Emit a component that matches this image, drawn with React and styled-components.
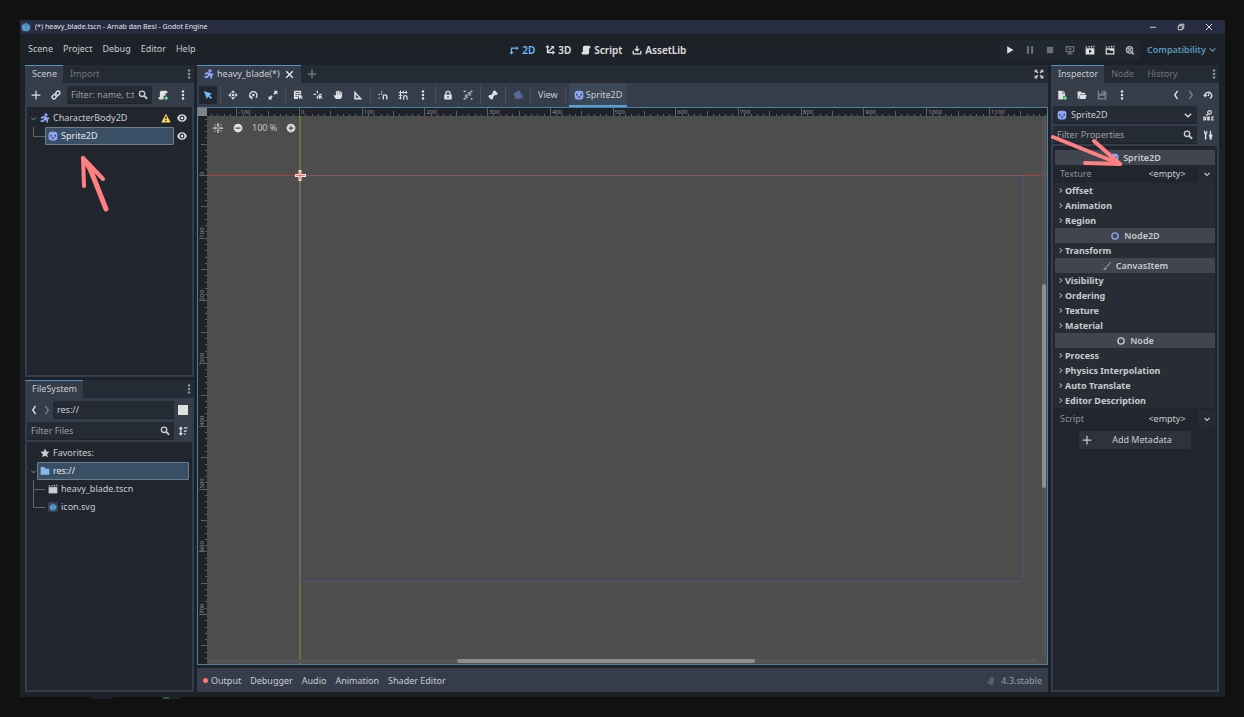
import React, { useState } from "react";
import styled, { createGlobalStyle, css } from "styled-components";

const UNIT = 62.72;
const ORIGIN = { x: 101, y: 67 };

const glyphs = {
  add: <path d="M7 1v6H1v2h6v6h2V9h6V7H9V1z" />,
  close: <path d="M3 1.5 1.5 3l5 5-5 5L3 14.5l5-5 5 5 1.500-1.500-5-5 5-5L13 1.500l-5 5z" />,
  link: (
    <g fill="none" stroke="currentColor" strokeWidth="2.2">
      <path d="M7 6.500V5.500l2.500-3a2.700 2.700 0 0 1 4 3.800L11 9H9" />
      <path d="M9 9.500v1l-2.500 3a2.700 2.700 0 0 1-4-3.800L5 7h2" />
      <path d="m6.500 9.500 3-3" />
    </g>
  ),
  search: (
    <g fill="none" stroke="currentColor">
      <circle cx="6.500" cy="6" r="4.300" strokeWidth="2.200" />
      <path d="m9.500 9 5 5" strokeWidth="3" />
    </g>
  ),
  dots: (
    <g>
      <circle cx="8" cy="2.500" r="2" />
      <circle cx="8" cy="8" r="2" />
      <circle cx="8" cy="13.500" r="2" />
    </g>
  ),
  body: (
    <g>
      <circle cx="9.500" cy="2.800" r="2.600" />
      <path
        d="M8.500 6 7.500 9.500l4 1.500v4M7.500 9.500 5 13H1M8.500 6.500H4L2 9M9 6.500l2.500 2h3.500"
        fill="none"
        stroke="currentColor"
        strokeWidth="2.800"
      />
    </g>
  ),
  sprite: (
    <g>
      <path d="M5 1C3 1 1 3 1 5v6c0 2 2 4 4 4h6c2 0 4-2 4-4V5c0-2-2-4-4-4z" />
      <g fill="#2f3a63">
        <ellipse cx="4.500" cy="7.500" rx="1.200" ry="1.700" />
        <ellipse cx="11.500" cy="7.500" rx="1.200" ry="1.700" />
        <path d="M5.500 10.500h5c-.5 2.500-4.500 2.500-5 0z" />
      </g>
    </g>
  ),
  warning: (
    <g>
      <path d="M8 1 .5 15h15z" />
      <path d="M7 5h2v5H7zm0 6h2v2H7z" fill="#21262e" />
    </g>
  ),
  eye: (
    <g>
      <path
        fillRule="evenodd"
        d="M8 2C4 2 1.300 4.800.3 8c1 3.200 3.700 6 7.700 6s6.700-2.800 7.700-6C14.700 4.800 12 2 8 2zm0 2a4 4 0 1 1 0 8 4 4 0 0 1 0-8z"
      />
      <circle cx="8" cy="8" r="2.200" />
    </g>
  ),
  script: <path d="M6 1a3 3 0 0 0-3 3v7H1v2a2 2 0 0 0 2 2h7a3 3 0 0 0 3-3V5h2V3a2 2 0 0 0-2-2z" />,
  scriptAdd: (
    <g>
      <path d="M6 1a3 3 0 0 0-3 3v7H1v2a2 2 0 0 0 2 2h6V9h3V5h3V3a2 2 0 0 0-2-2z" />
      <path d="M12 10h2v2h2v2h-2v2h-2v-2h-2v-2h2z" fill="#5fff97" />
    </g>
  ),
  chevronDown: <path d="m3 6 5 5 5-5" fill="none" stroke="currentColor" strokeWidth="2.200" />,
  chevronRight: <path d="m6 3 5 5-5 5" fill="none" stroke="currentColor" strokeWidth="2.400" />,
  back: <path d="M10.500 1.500 6 8l4.500 6.500" fill="none" stroke="currentColor" strokeWidth="2.200" />,
  forward: <path d="M5.500 1.500 10 8l-4.500 6.500" fill="none" stroke="currentColor" strokeWidth="2.200" />,
  select: <path d="m1.500 1.500 4.500 13 2.500-4 4 4 2-2-4-4 4-2.500z" />,
  move: (
    <g>
      <circle cx="8" cy="8" r="2.200" />
      <path d="M8 .5 4.500 4.500h7zM8 15.500l-3.500-4h7zM.5 8l4-3.500v7zM15.500 8l-4-3.500v7z" />
    </g>
  ),
  rotate: (
    <g>
      <path d="M4.500 12.500a5.800 5.800 0 1 1 8 0" fill="none" stroke="currentColor" strokeWidth="2.200" />
      <path d="M1 10h6v5.500z" />
      <circle cx="8.500" cy="8" r="2" />
    </g>
  ),
  scale: (
    <path d="M9 1h6v6l-2-2-2.500 2.500-2-2L11 3zM1 9v6h6l-2-2 2.500-2.500-2-2L3 11z" />
  ),
  listSelect: (
    <g>
      <path fillRule="evenodd" d="M1.500 1h11.500v6.500L8 6v8.500H1.500zM4 3v1.300h7V3zm0 3.500v1.300h3V6.500zM4 10v1.300h3V10z" />
      <path d="m8 7 2.500 8 1.500-2.500 2 2 1.500-1.500-2-2L16 9.500z" />
    </g>
  ),
  pivot: (
    <g>
      <path d="M6 1h2v4H6zM1 6h4v2H1zM10 6h4v2h-4zM6 10h2v4H6z" />
      <path d="m8 8 2 7 1.500-2.500 2 2 1.500-1.500-2-2L15 9.500z" />
    </g>
  ),
  pan: <path d="M7 1v6H6.500V2H4.700v7L2.500 7.500 1 9l3.500 5.500h7.500L14.500 11V3.500h-1.800V7h-.4V2h-1.800v5H10V1z" />,
  ruler: <path fillRule="evenodd" d="M2 1v14h13zm2.500 6 5 5.500h-5z" />,
  smartSnap: (
    <g>
      <path d="M5 2h2v2H5zM1 6h2v2H1zM5 6h2v2H5zM1 12h2v2H1z" />
      <path d="M8.500 15v-4.500a2.800 2.800 0 0 1 5.600 0V15" fill="none" stroke="currentColor" strokeWidth="2.200" />
    </g>
  ),
  gridSnap: (
    <g fill="none" stroke="currentColor">
      <path d="M4 1v14M8.500 1v5M13 1v5M1 4h14M1 8.500h6M1 13h5" strokeWidth="1.600" />
      <path d="M9 15.500v-4a2.700 2.700 0 0 1 5.400 0v4" strokeWidth="2" />
    </g>
  ),
  lock: (
    <path
      fillRule="evenodd"
      d="M8 1a4.500 4.500 0 0 0-4.500 4.500V7H2v8h12V7h-1.500V5.500A4.500 4.500 0 0 0 8 1zm0 2a2.500 2.500 0 0 1 2.500 2.500V7h-5V5.500A2.500 2.500 0 0 1 8 3zM7 9.500h2v3H7z"
    />
  ),
  group: (
    <g>
      <path d="M1 1h3v2H1zM12.500 1h2.500v2h-2.500zM1 13h3v2H1zM12.500 13h2.500v2h-2.500z" />
      <path d="M7 3h6v6H9V6H7z" opacity=".55" />
      <path d="M3 7h5v6H3z" opacity=".55" />
    </g>
  ),
  bone: (
    <g>
      <path d="m4.500 11.500 7-7" stroke="currentColor" strokeWidth="4.400" />
      <circle cx="10.300" cy="3.500" r="2.700" />
      <circle cx="12.500" cy="5.700" r="2.700" />
      <circle cx="3.500" cy="10.300" r="2.700" />
      <circle cx="5.700" cy="12.500" r="2.700" />
    </g>
  ),
  camera: (
    <g>
      <circle cx="9" cy="5" r="3.800" />
      <circle cx="4" cy="6.500" r="3" />
      <path d="M3 6h9.500v2.500l3-1v6l-3-1.500v2H3z" />
    </g>
  ),
  view2d: (
    <g>
      <path d="M4 13V5h8" fill="none" stroke="currentColor" strokeWidth="2" />
      <path d="M12 1.500 15.500 5 12 8.500zM.5 11h7L4 15z" />
    </g>
  ),
  view3d: (
    <g>
      <path d="M4 3v9h9M4 12l8-8" fill="none" stroke="currentColor" strokeWidth="2" />
      <path d="M4 0 .5 4h7zM16 12l-4-3.500v7zM14.500 1.500H9l5.500 5.500z" />
    </g>
  ),
  assetLib: (
    <g fill="none" stroke="currentColor" strokeWidth="2">
      <path d="M8 1v8M4.500 6 8 9.500 11.500 6M2 9v5h12V9" />
    </g>
  ),
  play: <path d="M3.500 2v12l10-6z" />,
  pause: <path d="M3 2h3.500v12H3zM9.500 2H13v12H9.500z" />,
  stop: <path d="M3 3h10v10H3z" />,
  remote: (
    <path fillRule="evenodd" d="M1 1.500h14v10H9.500v1.500H12v2H4v-2h2.500v-1.500H1zm2 2v6h10v-6zM6 4l5.500 2.500L6 9z" />
  ),
  playScene: (
    <g>
      <path d="m1 2.500 2-.5 1 2H1zM5 2l2-.3 1 2.300H6zM9 1.500l2-.3 1 2.800h-2zM13 1l2-.3V4h-1z" />
      <path fillRule="evenodd" d="M1 5h14v10H1zm5.500 2v6l4.500-3z" />
    </g>
  ),
  playCustom: (
    <g>
      <path d="m1 2.500 2-.5 1 2H1zM5 2l2-.3 1 2.300H6zM9 1.500l2-.3 1 2.800h-2zM13 1l2-.3V4h-1z" />
      <path fillRule="evenodd" d="M1 5h14v10H1zm2 2.500V13h10V9H8L7 7.500z" />
    </g>
  ),
  movie: (
    <path
      fillRule="evenodd"
      d="M7.500 1a6.500 6.500 0 1 0 3 12.300V15H15v-2h-2V9.500A6.500 6.500 0 0 0 7.500 1zm0 2a1.300 1.300 0 1 1 0 2.600 1.300 1.300 0 0 1 0-2.600zM4.500 6.500a1.300 1.300 0 1 1 0 2.600 1.300 1.300 0 0 1 0-2.600zm6 0a1.300 1.300 0 1 1 0 2.600 1.300 1.300 0 0 1 0-2.600zm-3 3a1.300 1.300 0 1 1 0 2.600 1.300 1.300 0 0 1 0-2.600z"
    />
  ),
  clapper: (
    <g>
      <path d="m1 2.500 2-.5 1 2H1zM5 2l2-.3 1 2.300H6zM9 1.500l2-.3 1 2.800h-2zM13 1l2-.3V4h-1z" />
      <path d="M1 5h14v10H1z" />
    </g>
  ),
  expand: (
    <path d="M1 1h5L4.500 2.500 7 5 5 7 2.500 4.500 1 6zM15 1v5l-1.500-1.500L11 7 9 5l2.500-2.500L10 1zM1 15v-5l1.500 1.500L5 9l2 2-2.500 2.500L6 15zM15 15h-5l1.500-1.500L9 11l2-2 2.500 2.500L15 10z" />
  ),
  fileNew: (
    <g>
      <path d="M2 1h7v5h4v4h-3v5H2zM10 1l3.500 4H10z" />
      <path d="M12 10h2v2h2v2h-2v2h-2v-2h-2v-2h2z" fill="#5fff97" />
    </g>
  ),
  folderOpen: <path d="M1 13V2.500h5l1.500 2H13V7H5l-2 6.500zM5.500 8H15.500l-2 6.500h-10z" />,
  save: <path fillRule="evenodd" d="M1 1h2v5h7V1h2.500L15 3.500V15H1zm6 0h2v4H7zM4 9v4h8V9z" />,
  history: (
    <g>
      <path d="M3.500 9.500a5.200 5.200 0 1 1 7.500 4" fill="none" stroke="currentColor" strokeWidth="2.200" />
      <path d="M0 7.500h7L3.500 12z" />
      <path d="M8 5.500h2v4H7.500V8H8z" />
    </g>
  ),
  docs: (
    <g fill="none" stroke="currentColor" strokeWidth="1.800">
      <circle cx="9.500" cy="3.500" r="2.600" />
      <path d="M8 5.500 4.500 8" />
      <path d="M1.500 10.500v4H3c1.500 0 1.500-4 0-4zM7 10.500h2v4H7zM15.500 10.500H13v4h2.500" />
    </g>
  ),
  tools: (
    <path d="M1.500 1v4L3 6.500V15h2.500V6.500L7 5V1H5.500v3h-2V1zM11 1h2v6h2v3l-1 1v4h-3.500v-4l-1-1V7H11z" />
  ),
  sort: (
    <path d="M4.500.5 8 5H5.500v6H8l-3.500 4.500L1 11h2.500V5H1zM9.500 2H15v2H9.500zM9.500 7H14v2H9.500zM9.500 12h2.500v2H9.500z" />
  ),
  square: <path d="M0 0h16v16H0z" />,
  star: <path d="m8 .8 2.200 4.700 5.100.6-3.800 3.500 1 5.100L8 12.200l-4.500 2.500 1-5.100L.7 6.100l5.100-.6z" />,
  folder: <path d="M1 13.500v-12h6l1.500 3H15v9.500H1z" />,
  ring: <circle cx="8" cy="8" r="5" fill="none" stroke="currentColor" strokeWidth="2.200" />,
  brush: <path d="M14 1 7 8l2 2 6-8zM6 9c-2 0-1.500 3-5 5 3 1 6.500.5 7-3z" />,
  center: (
    <g>
      <path d="M7 0h2v3H7zM7 13h2v3H7zM0 7h3v2H0zM13 7h3v2h-3zM7 7h2v2H7z" />
      <path d="M5.500 3.500h5L8 6.500zM5.500 12.500h5L8 9.500zM3.500 5.500v5L6.500 8zM12.500 5.500v5L9.500 8z" />
      <path d="M2 2h2v2H2zM12 2h2v2h-2zM2 12h2v2H2zM12 12h2v2h-2z" opacity=".7" />
    </g>
  ),
  zoomOut: <path fillRule="evenodd" d="M8 1a7 7 0 1 0 0 14A7 7 0 0 0 8 1zM4 7h8v2H4z" />,
  zoomIn: <path fillRule="evenodd" d="M8 1a7 7 0 1 0 0 14A7 7 0 0 0 8 1zM7 4h2v3h3v2H9v3H7V9H4V7h3z" />,
  bell: <path d="M10 1 8.500 2C5.500 2 5.500 5 5 7.500L1.500 11 10 15l1-2 1.500-1.500V7c1-2 1-4-1-5z" />,
  godot: (
    <g>
      <path d="M7 1 6 3 4 2 3 4 1 5v6c0 2.500 3.500 4 7 4s7-1.500 7-4V5l-2-1-1-2-2 1-1-2z" fill="#478cbf" />
      <circle cx="4.800" cy="8.500" r="1.300" fill="#9cc3df" />
      <circle cx="11.200" cy="8.500" r="1.300" fill="#9cc3df" />
      <path d="M4 12h8v1H4z" fill="#7fb0d4" />
    </g>
  ),
  projectIcon: (
    <g>
      <rect width="16" height="16" rx="2" fill="#363d52" />
      <path d="M7 2.500 6 4 4.500 3.500 4 5 2.500 5.500v5c0 2 2.500 3.300 5.500 3.300s5.500-1.300 5.500-3.300v-5L12 5l-.5-1.500L10 4 9 2.500z" fill="#478cbf" />
      <circle cx="5.500" cy="8.500" r="1" fill="#a9cde6" />
      <circle cx="10.500" cy="8.500" r="1" fill="#a9cde6" />
    </g>
  ),
  minimize: <path d="M2 8.500h12" stroke="currentColor" strokeWidth="1.800" />,
  restore: (
    <path d="M2.500 5.500h8v8h-8zM5.500 5V2.500h8v8H11" fill="none" stroke="currentColor" strokeWidth="1.800" />
  ),
  cross: <path d="m2 2 12 12M14 2 2 14" stroke="currentColor" strokeWidth="1.800" />,
};

const Icon = ({ name, size = 10, color }) => (
  <Glyph viewBox="0 0 16 16" $size={size} $color={color} aria-hidden="true">
    {glyphs[name]}
  </Glyph>
);

const leftTools = [
  ["move", "rotate", "scale"],
  ["listSelect", "pivot", "pan", "ruler"],
  ["smartSnap", "gridSnap", "dots"],
  ["lock", "group"],
  ["bone"],
];

const runButtons = [
  { name: "play" },
  { name: "pause", dim: true },
  { name: "stop", dim: true },
  { name: "remote", dim: true },
  { name: "playScene" },
  { name: "playCustom" },
  { name: "movie", color: "#a9adb3" },
];

const range = (from, to) => Array.from({ length: to - from + 1 }, (_, i) => from + i);

const Dock = ({ label, tabs, children }) => (
  <DockFrame aria-label={label}>
    <TabBar>
      {tabs.map((tab, i) => (
        <Tab key={tab} $active={i === 0}>{tab}</Tab>
      ))}
      <Spacer />
      <TabMenu aria-label={`${label} options`}>
        <Icon name="dots" color="#8a9099" />
      </TabMenu>
    </TabBar>
    {children}
  </DockFrame>
);

const Canvas = () => {
  const left = ORIGIN.x;
  const top = ORIGIN.y;
  const right = Math.round(left + UNIT * 11.52);
  const bottom = Math.round(top + UNIT * 6.48);

  return (
    <CanvasSvg>
      <rect width="100%" height="100%" fill="#4d4d4d" />
      <rect x={left} y="0" width="2" height="100%" fill="#5d7b32" />
      <rect x="0" y={top} width="100%" height="1" fill="#b03c4a" />
      <rect x={left} y={top} width={right - left} height="1" fill="#8c4f78" />
      <rect x={left} y={top} width="2" height={bottom - top} fill="#5f7060" />
      <rect x={right} y={top} width="1" height={bottom - top} fill="#575388" />
      <rect x={left} y={bottom} width={right - left} height="1" fill="#57546f" />
      <path d={`M${left - 4} ${top + 0.5}h11M${left + 1} ${top - 5}v11`} stroke="#f4e4e4" strokeWidth="3" />
      <path d={`M${left - 3} ${top + 0.5}h9M${left + 1} ${top - 4}v9`} stroke="#ff6b5f" strokeWidth="1" />

      <rect width="100%" height="8" fill="#1e2329" />
      <rect width="9" height="100%" fill="#1e2329" />
      {range(-14, 119).map((n) => {
        const x = Math.round(left + (n * UNIT) / 10);
        const size = n % 10 === 0 ? 8 : n % 5 === 0 ? 5 : 2;
        return <rect key={n} x={x} y={8 - size} width="1" height={size} fill="#5b6068" />;
      })}
      {range(-9, 77).map((n) => {
        const y = Math.round(top + (n * UNIT) / 10);
        const size = n % 10 === 0 ? 8 : n % 5 === 0 ? 6 : 2;
        return <rect key={n} x={9 - size} y={y} width={size} height="1" fill="#5b6068" />;
      })}
      {range(-1, 11).map((n) => (
        <RulerText key={n} x={left + n * UNIT + 2} y="6">{n * 100}</RulerText>
      ))}
      {range(0, 7).map((n) => (
        <RulerText key={n} transform={`translate(6 ${top + n * UNIT}) rotate(-90)`}>{n * 100}</RulerText>
      ))}
      <rect width="9" height="8" fill="#7f8388" />
    </CanvasSvg>
  );
};

const Section = ({ title }) => (
  <SectionRow>
    <Icon name="chevronRight" size={7} color="#a4a8ae" />
    {title}
  </SectionRow>
);

const Category = ({ icon, color, title }) => (
  <CategoryRow>
    <Icon name={icon} color={color} />
    {title}
  </CategoryRow>
);

const Property = ({ id, title }) => (
  <PropertyRow>
    <label htmlFor={id}>{title}</label>
    <PropertyValue>
      <EmptySelect id={id}>
        <option>&lt;empty&gt;</option>
      </EmptySelect>
      <PropertyArrow>
        <Icon name="chevronDown" size={8} color="#c8cacd" />
      </PropertyArrow>
    </PropertyValue>
  </PropertyRow>
);

const App = () => {
  const [tool, setTool] = useState("select");

  const toolButton = (name) => (
    <IconButton key={name} aria-label={name} $active={tool === name} onClick={() => setTool(name)}>
      <Icon name={name} color={tool === name ? "#70bafa" : "#e0e0e0"} />
    </IconButton>
  );

  return (
    <Page>
      <GlobalStyle />
      <Window>
        <TitleBar>
          <Icon name="godot" />
          <TitleText>(*) heavy_blade.tscn - Arnab dan Besi - Godot Engine</TitleText>
          <Spacer />
          <WindowButton aria-label="Minimize"><Icon name="minimize" size={8} /></WindowButton>
          <WindowButton aria-label="Restore"><Icon name="restore" size={8} /></WindowButton>
          <WindowButton aria-label="Close"><Icon name="cross" size={8} /></WindowButton>
        </TitleBar>

        <MenuBar>
          <Menus>
            {["Scene", "Project", "Debug", "Editor", "Help"].map((menu) => (
              <MenuButton key={menu}>{menu}</MenuButton>
            ))}
          </Menus>
          <Screens>
            <ScreenButton $active><Icon name="view2d" />2D</ScreenButton>
            <ScreenButton><Icon name="view3d" />3D</ScreenButton>
            <ScreenButton><Icon name="script" />Script</ScreenButton>
            <ScreenButton><Icon name="assetLib" />AssetLib</ScreenButton>
          </Screens>
          <RunArea>
            <RunBar>
              {runButtons.map(({ name, dim, color }) => (
                <RunButton key={name} aria-label={name} disabled={dim}>
                  <Icon name={name} color={dim ? "#6b7077" : color || "#e0e0e0"} />
                </RunButton>
              ))}
            </RunBar>
            <Renderer>
              <RendererSelect aria-label="Rendering method">
                <option>Compatibility</option>
              </RendererSelect>
              <Icon name="chevronDown" size={9} />
            </Renderer>
          </RunArea>
        </MenuBar>

        <Body>
          <SideColumn>
            <Dock label="Scene" tabs={["Scene", "Import"]}>
              <SceneTools>
                <IconButton aria-label="Add node"><Icon name="add" /></IconButton>
                <IconButton aria-label="Instantiate scene"><Icon name="link" /></IconButton>
                <Field>
                  <Input aria-label="Filter nodes" placeholder="Filter: name, t:t" />
                  <Icon name="search" />
                </Field>
                <IconButton aria-label="Attach script"><Icon name="scriptAdd" /></IconButton>
                <IconButton aria-label="More"><Icon name="dots" /></IconButton>
              </SceneTools>
              <Tree>
                <TreeRow>
                  <Fold><Icon name="chevronDown" size={7} color="#8f949b" /></Fold>
                  <TreeItem>
                    <Icon name="body" color="#8da5f3" />
                    CharacterBody2D
                    <Spacer />
                    <Icon name="warning" color="#ffdd65" />
                  </TreeItem>
                  <EyeButton aria-label="Toggle CharacterBody2D"><Icon name="eye" /></EyeButton>
                </TreeRow>
                <TreeRow>
                  <Guide $last />
                  <TreeItem $selected>
                    <Icon name="sprite" color="#8da5f3" />
                    Sprite2D
                  </TreeItem>
                  <EyeButton aria-label="Toggle Sprite2D"><Icon name="eye" /></EyeButton>
                </TreeRow>
              </Tree>
              <SceneArrow viewBox="0 0 34 60">
                <path d="M12 18 27 56" strokeWidth="5" />
                <path d="M5 33 4 5 24 26" strokeWidth="4" />
                <path d="M4 5 14 22" strokeWidth="4" />
              </SceneArrow>
            </Dock>

            <Dock label="FileSystem" tabs={["FileSystem"]}>
              <FileTools>
                <NavButton aria-label="Back"><Icon name="back" /></NavButton>
                <NavButton aria-label="Forward" disabled><Icon name="forward" color="#7b8088" /></NavButton>
                <Field>
                  <Input aria-label="Path" defaultValue="res://" />
                </Field>
                <IconButton aria-label="Split view"><Icon name="square" /></IconButton>
              </FileTools>
              <FilterRow>
                <Field>
                  <Input aria-label="Filter files" placeholder="Filter Files" />
                  <Icon name="search" />
                </Field>
                <IconButton aria-label="Sort files"><Icon name="sort" /></IconButton>
              </FilterRow>
              <Tree>
                <TreeRow $inset>
                  <Fold />
                  <TreeItem><Icon name="star" />Favorites:</TreeItem>
                </TreeRow>
                <TreeRow $inset>
                  <Fold><Icon name="chevronDown" size={7} color="#8f949b" /></Fold>
                  <TreeItem $selected><Icon name="folder" color="#8ab8e6" />res://</TreeItem>
                </TreeRow>
                <TreeRow $inset>
                  <Guide />
                  <TreeItem><Icon name="clapper" />heavy_blade.tscn</TreeItem>
                </TreeRow>
                <TreeRow $inset>
                  <Guide $last />
                  <TreeItem><Icon name="projectIcon" />icon.svg</TreeItem>
                </TreeRow>
              </Tree>
            </Dock>
          </SideColumn>

          <MainColumn>
            <Editor>
              <TabBar>
                <Tab as="div" $active>
                  <Icon name="body" color="#8da5f3" />
                  heavy_blade(*)
                  <CloseTab aria-label="Close scene"><Icon name="close" size={9} color="#ffffff" /></CloseTab>
                </Tab>
                <TabMenu aria-label="New scene"><Icon name="add" color="#7d838b" /></TabMenu>
                <Spacer />
                <TabMenu aria-label="Distraction free"><Icon name="expand" /></TabMenu>
              </TabBar>
              <ToolBar>
                {toolButton("select")}
                {leftTools.map((group) => (
                  <React.Fragment key={group[0]}>
                    <Separator />
                    {group.map(toolButton)}
                  </React.Fragment>
                ))}
                <Separator />
                <IconButton aria-label="Override camera"><Icon name="camera" color="#56699a" /></IconButton>
                <Separator />
                <ViewButton>View</ViewButton>
                <Separator />
                <ContextTab><Icon name="sprite" color="#8da5f3" />Sprite2D</ContextTab>
              </ToolBar>
              <Viewport>
                <Canvas />
                <ZoomBar>
                  <ZoomButton aria-label="Center view"><Icon name="center" /></ZoomButton>
                  <ZoomButton aria-label="Zoom out"><Icon name="zoomOut" /></ZoomButton>
                  <ZoomValue>100 %</ZoomValue>
                  <ZoomButton aria-label="Zoom in"><Icon name="zoomIn" /></ZoomButton>
                </ZoomBar>
                <HTrack><HThumb /></HTrack>
                <VTrack><VThumb /></VTrack>
              </Viewport>
            </Editor>
            <BottomBar>
              <BottomButton><Dot />Output</BottomButton>
              {["Debugger", "Audio", "Animation", "Shader Editor"].map((panel) => (
                <BottomButton key={panel}>{panel}</BottomButton>
              ))}
              <Spacer />
              <Version><Icon name="bell" color="#5a5f68" />4.3.stable</Version>
            </BottomBar>
          </MainColumn>

          <Dock label="Inspector" tabs={["Inspector", "Node", "History"]}>
            <InspectorTools>
              <IconButton aria-label="New resource"><Icon name="fileNew" /></IconButton>
              <IconButton aria-label="Load resource"><Icon name="folderOpen" /></IconButton>
              <IconButton aria-label="Save resource" disabled><Icon name="save" color="#7b8088" /></IconButton>
              <IconButton aria-label="More"><Icon name="dots" /></IconButton>
              <Spacer />
              <NavButton aria-label="Previous"><Icon name="back" /></NavButton>
              <NavButton aria-label="Next" disabled><Icon name="forward" color="#7b8088" /></NavButton>
              <IconButton aria-label="Object history"><Icon name="history" /></IconButton>
            </InspectorTools>
            <FilterRow $gap>
              <Field>
                <Icon name="sprite" color="#8da5f3" />
                <ObjectSelect aria-label="Edited object">
                  <option>Sprite2D</option>
                </ObjectSelect>
                <Icon name="chevronDown" color="#e0e0e0" />
              </Field>
              <IconButton aria-label="Open docs"><Icon name="docs" size={11} /></IconButton>
            </FilterRow>
            <FilterRow $gap>
              <Field>
                <Input aria-label="Filter properties" placeholder="Filter Properties" />
                <Icon name="search" />
              </Field>
              <IconButton aria-label="Property tools"><Icon name="tools" /></IconButton>
            </FilterRow>
            <Properties>
              <Category icon="sprite" color="#8da5f3" title="Sprite2D" />
              <Property id="texture" title="Texture" />
              <Section title="Offset" />
              <Section title="Animation" />
              <Section title="Region" />
              <Category icon="ring" color="#8da5f3" title="Node2D" />
              <Section title="Transform" />
              <Category icon="brush" color="#858a91" title="CanvasItem" />
              <Section title="Visibility" />
              <Section title="Ordering" />
              <Section title="Texture" />
              <Section title="Material" />
              <Category icon="ring" title="Node" />
              <Section title="Process" />
              <Section title="Physics Interpolation" />
              <Section title="Auto Translate" />
              <Section title="Editor Description" />
              <Property id="script" title="Script" />
              <MetadataButton>
                <Icon name="add" />
                <span>Add Metadata</span>
              </MetadataButton>
            </Properties>
            <InspectorArrow viewBox="0 0 76 34">
              <path d="M4 5 71 32" strokeWidth="4" />
              <path d="M45 9 71 32 36 31" strokeWidth="4" />
            </InspectorArrow>
          </Dock>
        </Body>
      </Window>
      <Taskbar />
    </Page>
  );
};

const GlobalStyle = createGlobalStyle`
  * {
    box-sizing: border-box;
  }

  body {
    margin: 0;
    background: #111111;
  }

  button, input, select {
    font: inherit;
    color: inherit;
    background: none;
    border: 0;
    padding: 0;
    margin: 0;
    outline: none;
  }
`;

const Page = styled.div`
  display: flex;
  flex-direction: column;
  min-height: 100vh;
  padding: 20px 19px 18px 20px;
  background: #111111;
  color: #c9cbce;
  font-family: "Noto Sans", sans-serif;
  font-size: 9px;
  line-height: 12px;
`;

const Window = styled.main`
  flex: 1;
  display: flex;
  flex-direction: column;
  background: #1d2229;
`;

const Taskbar = styled.div`
  height: 2px;
  background: linear-gradient(90deg, transparent 71px, #1a2029 71px 93px, transparent 93px 143px, #2c5a36 143px 149px, #20242a 149px 160px, transparent 160px);
`;

const Glyph = styled.svg`
  flex: none;
  display: block;
  width: ${(props) => props.$size}px;
  height: ${(props) => props.$size}px;
  color: ${(props) => props.$color || "inherit"};
  fill: currentColor;
`;

const Spacer = styled.div`
  flex: 1;
`;

const TitleBar = styled.header`
  display: flex;
  align-items: center;
  height: 14px;
  padding: 0 2px 0 1px;
  background: #282c40;
  color: #e6e6ea;
`;

const TitleText = styled.span`
  margin-left: 4px;
  font-size: 7px;
`;

const WindowButton = styled.button`
  display: flex;
  justify-content: center;
  width: 28px;
`;

const MenuBar = styled.nav`
  display: flex;
  justify-content: space-between;
  align-items: center;
  height: 31px;
  padding: 0 8px 0 4px;
`;

const Menus = styled.div`
  display: flex;
  gap: 10px;
  padding: 0 0 2px 4px;
`;

const MenuButton = styled.button`
  padding: 0;
`;

const Screens = styled.div`
  display: flex;
  gap: 10px;
`;

const ScreenButton = styled.button`
  display: flex;
  align-items: center;
  gap: 3px;
  font-size: 10px;
  font-weight: 600;
  color: ${(props) => (props.$active ? "#70bafa" : "#e0e0e0")};
`;

const RunArea = styled.div`
  display: flex;
  align-items: center;
  gap: 7px;
`;

const RunBar = styled.div`
  display: flex;
  height: 20px;
  background: #21272e;
  border-radius: 2px;
`;

const RunButton = styled.button`
  display: flex;
  align-items: center;
  justify-content: center;
  width: 20px;
`;

const Renderer = styled.div`
  display: flex;
  align-items: center;
  gap: 2px;
  color: #5a97bd;
  font-weight: 600;
`;

const RendererSelect = styled.select`
  appearance: none;
`;

const Body = styled.div`
  flex: 1;
  display: grid;
  grid-template-columns: 169px minmax(0, 1fr) 168px;
  gap: 3px;
  padding: 0 6px 5px 5px;
`;

const SideColumn = styled.div`
  display: flex;
  flex-direction: column;
  gap: 3px;
`;

const DockFrame = styled.section`
  position: relative;
  flex: 1;
  display: flex;
  flex-direction: column;
  padding-bottom: 2px;
  background: #363d4a;
`;

const TabBar = styled.div`
  display: flex;
  height: 18px;
  background: #252b34;
`;

const Tab = styled.button`
  display: flex;
  align-items: center;
  gap: 3px;
  padding: 0 7px 1px;
  border-top: 1px solid transparent;
  color: #6f757e;

  ${DockFrame} & {
    padding: 0 6px 1px 7px;
  }

  ${(props) =>
    props.$active &&
    css`
      background: #363d4a;
      border-top-color: #5291bf;
      color: #c9cbce;
    `}
`;

const TabMenu = styled.button`
  display: flex;
  align-items: center;
  justify-content: center;
  width: 18px;
  margin-left: 2px;

  ${DockFrame} & {
    width: 10px;
  }
`;

const CloseTab = styled.button`
  margin-left: 2px;
`;

const toolRow = css`
  display: flex;
  align-items: center;
  height: 24px;
  padding: 0 2px;
`;

const SceneTools = styled.div`
  ${toolRow}
  gap: 2px;
`;

const FileTools = styled.div`
  ${toolRow}
`;

const InspectorTools = styled.div`
  ${toolRow}
  gap: 2px;
  height: 23px;
`;

const FilterRow = styled.div`
  display: flex;
  align-items: center;
  gap: ${(props) => (props.$gap ? "2px" : "0")};
  height: 18px;
  padding: 0 2px;
  margin-bottom: 2px;
`;

const Field = styled.div`
  flex: 1;
  display: flex;
  align-items: center;
  gap: 4px;
  min-width: 0;
  height: 18px;
  padding: 0 4px;
  background: #252b34;
  border-bottom: 1px solid #1e232b;
  border-radius: 1px;
`;

const Input = styled.input`
  flex: 1;
  min-width: 0;

  &::placeholder {
    color: #9a9ea5;
    opacity: 1;
  }
`;

const ObjectSelect = styled.select`
  flex: 1;
  appearance: none;
`;

const IconButton = styled.button`
  display: flex;
  align-items: center;
  justify-content: center;
  flex: none;
  width: 18px;
  height: 18px;
  border-radius: 2px;
  color: #e0e0e0;
  background: ${(props) => (props.$active ? "#21272f" : "none")};
`;

const NavButton = styled.button`
  display: flex;
  justify-content: center;
  width: 13px;
  color: #e0e0e0;
`;

const Tree = styled.div`
  flex: 1;
  margin: 0 2px;
  padding: 2px 0;
  background: #21262e;
`;

const TreeRow = styled.div`
  display: flex;
  align-items: center;
  height: 18px;
  padding-right: ${(props) => (props.$inset ? "3px" : "2px")};
`;

const Fold = styled.span`
  flex: none;
  display: flex;
  justify-content: flex-end;
  width: 10px;
`;

const Guide = styled.span`
  flex: none;
  align-self: stretch;
  width: 12px;
  margin-left: 6px;
  background:
    linear-gradient(#5d636c, #5d636c) 0 0 / 1px ${(props) => (props.$last ? "50%" : "100%")} no-repeat,
    linear-gradient(#5d636c, #5d636c) 0 50% / 100% 1px no-repeat;
`;

const TreeItem = styled.button`
  flex: 1;
  display: flex;
  align-items: center;
  gap: 3px;
  height: 18px;
  padding: 0 2px;
  border: 1px solid transparent;
  border-radius: 1px;

  ${(props) =>
    props.$selected &&
    css`
      background: #384f65;
      border-color: #6f7c89;
      color: #e6e8ea;
    `}
`;

const EyeButton = styled.button`
  display: flex;
  justify-content: center;
  width: 16px;
  color: #e0e0e0;
`;

const MainColumn = styled.div`
  display: flex;
  flex-direction: column;
  gap: 3px;
`;

const Editor = styled.section`
  flex: 1;
  display: flex;
  flex-direction: column;
  background: #363d4a;
`;

const ToolBar = styled.div`
  ${toolRow}
  gap: 2px;
`;

const Separator = styled.span`
  width: 1px;
  height: 18px;
  margin: 0 1px;
  background: #4a515d;
`;

const ViewButton = styled.button`
  padding: 0 4px;
`;

const ContextTab = styled.button`
  display: flex;
  align-items: center;
  gap: 2px;
  height: 24px;
  padding: 2px 5px 0;
  border-bottom: 2px solid #5a9fd4;
  background: #3a4858;
`;

const Viewport = styled.div`
  position: relative;
  flex: 1;
  border: 1px solid #507fa6;
  overflow: hidden;
`;

const CanvasSvg = styled.svg`
  position: absolute;
  inset: 0;
  width: 100%;
  height: 100%;
`;

const RulerText = styled.text`
  fill: #8d9197;
  font-size: 6px;
`;

const ZoomBar = styled.div`
  position: absolute;
  top: 14px;
  left: 14px;
  display: flex;
  align-items: center;
  gap: 8px;
  color: #e0e0e0;
`;

const ZoomButton = styled.button`
  padding: 0 1px;
`;

const ZoomValue = styled.span`
  color: #c4c4c4;
`;

const HTrack = styled.div`
  position: absolute;
  left: 10px;
  right: 10px;
  bottom: 1px;
  height: 4px;
  background: #555555;
`;

const HThumb = styled.div`
  width: 36%;
  height: 4px;
  margin-left: 30%;
  border-radius: 2px;
  background: #8e8e8e;
`;

const VTrack = styled.div`
  position: absolute;
  top: 9px;
  right: 1px;
  bottom: 9px;
  width: 4px;
  background: #555555;
`;

const VThumb = styled.div`
  position: absolute;
  top: 31%;
  width: 4px;
  height: 38%;
  border-radius: 2px;
  background: #8e8e8e;
`;

const BottomBar = styled.footer`
  display: flex;
  align-items: center;
  gap: 9px;
  height: 24px;
  padding: 1px 6px 0;
  background: #363d4a;
`;

const BottomButton = styled.button`
  display: flex;
  align-items: center;
  gap: 3px;
`;

const Dot = styled.span`
  width: 5px;
  height: 5px;
  border-radius: 50%;
  background: #ff786b;
`;

const Version = styled.span`
  display: flex;
  align-items: center;
  gap: 5px;
  color: #9a9ea5;
`;

const Properties = styled.div`
  flex: 1;
  display: flex;
  flex-direction: column;
  margin: 0 2px;
  padding: 4px 2px 2px;
  background: #21262e;
`;

const CategoryRow = styled.h3`
  display: flex;
  align-items: center;
  justify-content: center;
  gap: 4px;
  height: 15px;
  margin: 0;
  background: #40454f;
  font-size: 9px;
  font-weight: 600;
`;

const SectionRow = styled.button`
  display: flex;
  align-items: center;
  gap: 1px;
  height: 15px;
  padding: 0 2px;
  background: #272c35;
  font-weight: 700;
`;

const PropertyRow = styled.div`
  display: flex;
  align-items: center;
  height: 18px;
  padding-left: 5px;
  color: #8d9299;

  ${SectionRow} + & {
    margin-top: 2px;
  }

  & > label {
    flex: 1;
  }
`;

const PropertyValue = styled.div`
  display: flex;
  color: #c9cbce;
`;

const EmptySelect = styled.select`
  width: 62px;
  height: 18px;
  appearance: none;
  text-align: center;
`;

const PropertyArrow = styled.span`
  display: flex;
  align-items: center;
  justify-content: center;
  width: 17px;
  background: #252a34;
`;

const MetadataButton = styled.button`
  display: flex;
  align-items: center;
  align-self: center;
  gap: 4px;
  width: 70%;
  height: 18px;
  margin-top: 3px;
  padding: 0 3px;
  background: #2d323c;

  & > span {
    flex: 1;
  }
`;

const Annotation = styled.svg`
  position: absolute;
  fill: none;
  stroke: #ff8080;
  stroke-linecap: round;
  stroke-linejoin: round;
  pointer-events: none;
`;

const SceneArrow = styled(Annotation)`
  top: 88px;
  left: 54px;
  width: 34px;
  height: 60px;
`;

const InspectorArrow = styled(Annotation)`
  top: 67px;
  left: -2px;
  width: 76px;
  height: 34px;
`;

export default App;
